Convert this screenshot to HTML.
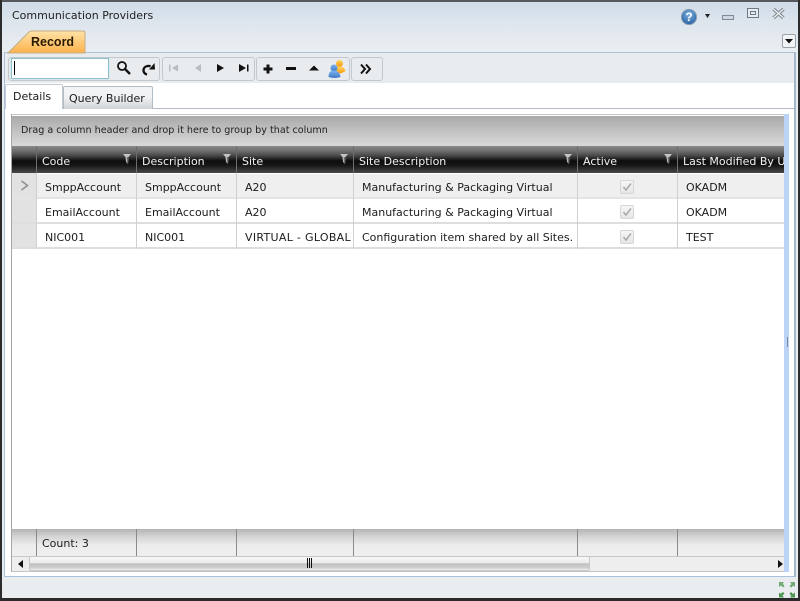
<!DOCTYPE html>
<html><head><meta charset="utf-8">
<style>
*{box-sizing:border-box}
html,body{margin:0;padding:0}
body{width:800px;height:601px;overflow:hidden;position:relative;background:#fff;font-family:"DejaVu Sans","Liberation Sans",sans-serif;font-size:11px;color:#1c1c1c}
.a{position:absolute}
.t{position:absolute;white-space:nowrap;line-height:14px}
.btn{position:absolute;top:57px;height:24px;border:1px solid #c4c8cc;border-radius:3px;background:#e9ecef}
.h{position:absolute;top:146px;height:27px;border-right:1px solid #6e6e6e}
.hl{position:absolute;top:155px;color:#f2f2f2;white-space:nowrap;line-height:14px;font-size:11px}
.v{position:absolute;width:1px;background:#d0d0d0}
.r{position:absolute;left:12px;width:772px;height:1px;background:#d4d4d4}
.cb{position:absolute;left:620px;width:14px;height:14px;border:1px solid #d6d6d6;border-radius:2px;background:linear-gradient(#f6f6f6,#e6e6e6)}
.fc{position:absolute;top:529px;height:27px;width:1px;background:#8a8a8a}
</style></head><body>
<!-- window frame -->
<div class="a" style="left:0;top:0;width:800px;height:601px;background:#e9edf0"></div>
<div class="a" style="left:2px;top:2px;width:796px;height:50px;background:linear-gradient(#cfdbe8,#dde5ed 40%,#eaeef1)"></div>
<div class="a" style="left:0;top:0;width:800px;height:2px;background:#55585c"></div>
<div class="a" style="left:0;top:0;width:2px;height:601px;background:#2c2c2c"></div>
<div class="a" style="left:798px;top:0;width:2px;height:601px;background:#2c2c2c"></div>
<div class="a" style="left:0;top:598px;width:800px;height:3px;background:#2a2a2a"></div>
<div class="t" style="left:12px;top:9px;font-size:11px;color:#222">Communication Providers</div>

<!-- title icons -->
<svg class="a" style="left:680px;top:8px" width="18" height="18" viewBox="0 0 18 18"><defs><radialGradient id="q" cx=".5" cy=".35" r=".7"><stop offset="0" stop-color="#7fb2e2"/><stop offset="1" stop-color="#1f5c9c"/></radialGradient></defs><circle cx="9" cy="9" r="7.6" fill="url(#q)" stroke="#8ba0b4"/><text x="9" y="13" font-size="12" font-weight="bold" fill="#fff" text-anchor="middle" font-family="Liberation Sans">?</text></svg>
<svg class="a" style="left:704px;top:14px" width="8" height="5"><path d="M1 0h5L3.500 4z" fill="#222"/></svg>
<div class="a" style="left:722px;top:15px;width:12px;height:5px;border:1px solid #7d8a97;background:#cfd8e0"></div>
<div class="a" style="left:747px;top:8px;width:12px;height:10px;border:1px solid #6d7986;background:#e6ebf0"><div style="margin:2px;height:4px;border:1px solid #6d7986"></div></div>
<svg class="a" style="left:772px;top:8px" width="13" height="11"><path d="M1.500 1 11.500 10M11.500 1 1.500 10" stroke="#7d868e" stroke-width="3.400" fill="none"/><path d="M1.500 1 11.500 10M11.500 1 1.500 10" stroke="#eef1f3" stroke-width="1.300" fill="none"/></svg>
<div class="a" style="left:782px;top:34px;width:14px;height:14px;border:1px solid #9aa2aa;border-radius:2px;background:#f3f4f5"><svg style="position:absolute;left:2px;top:4px" width="8" height="5"><path d="M0 0h8L4 4.500z" fill="#111"/></svg></div>

<!-- content panel -->
<div class="a" style="left:4px;top:52px;width:792px;height:525px;background:#fff;border:1px solid #a9c1da"></div>
<div class="a" style="left:5px;top:53px;width:790px;height:30px;background:#e9ecef"></div>

<!-- record tab -->
<svg class="a" style="left:6px;top:29px" width="82" height="25"><defs><linearGradient id="o" x1="0" y1="0" x2="0" y2="1"><stop offset="0" stop-color="#ffe3a6"/><stop offset="1" stop-color="#fdb14c"/></linearGradient></defs><path d="M2 24 23 3Q24 2 26 2H77Q79 2 79 4V24Z" fill="url(#o)" stroke="#c6ad84"/></svg>
<div class="t" style="left:31px;top:35px;font-family:'Liberation Sans',sans-serif;font-weight:bold;font-size:12.500px;color:#2a1a00">Record</div>

<!-- toolbar -->
<div class="btn" style="left:8px;width:152px"></div>
<div class="btn" style="left:162px;width:93px"></div>
<div class="btn" style="left:256px;width:94px"></div>
<div class="btn" style="left:351px;width:32px"></div>
<div class="a" style="left:11px;top:58px;width:98px;height:21px;background:#fff;border:1px solid #8fc0cf;box-shadow:0 0 1px #a5d0dd"></div>
<div class="a" style="left:14px;top:61px;width:1px;height:14px;background:#000"></div>
<svg class="a" style="left:116px;top:60px" width="16" height="16"><circle cx="6" cy="6" r="4" fill="none" stroke="#111" stroke-width="1.800"/><path d="M9 9l5 5" stroke="#111" stroke-width="2.400"/></svg>
<svg class="a" style="left:141px;top:60px" width="15" height="17"><path d="M6 14.500C1.500 13.500 1 7 6.500 6c1.200-.2 2-.1 3 .4" fill="none" stroke="#111" stroke-width="2.400"/><path d="M8 9.500 14 9.500 13.500 3z" fill="#111"/></svg>
<svg class="a" style="left:168px;top:63px" width="12" height="11"><path d="M1 1.500h1.500v7H1zM10 1.500v7L4 5z" fill="#b9bdc1"/></svg>
<svg class="a" style="left:192px;top:63px" width="12" height="11"><path d="M9 1v8L3 5z" fill="#b9bdc1"/></svg>
<svg class="a" style="left:215px;top:63px" width="12" height="11"><path d="M2 1v8l7-4z" fill="#111"/></svg>
<svg class="a" style="left:238px;top:63px" width="12" height="11"><path d="M1 1v8l7-4zM9 1.500h1.500v7H9z" fill="#111"/></svg>
<svg class="a" style="left:262px;top:63px" width="12" height="12"><path d="M4.500 1.500h3v3h3v3h-3v3h-3v-3h-3v-3h3z" fill="#111"/></svg>
<div class="a" style="left:286px;top:67px;width:10px;height:3px;background:#111"></div>
<svg class="a" style="left:308px;top:64px" width="12" height="8"><path d="M1 6.500 6 1.500 11 6.500z" fill="#111"/></svg>
<svg class="a" style="left:328px;top:58px" width="20" height="21"><defs><linearGradient id="or" x1="0" y1="0" x2="0" y2="1"><stop offset="0" stop-color="#ffd35a"/><stop offset="1" stop-color="#f79a12"/></linearGradient><linearGradient id="bl" x1="0" y1="0" x2="0" y2="1"><stop offset="0" stop-color="#7fb4f0"/><stop offset="1" stop-color="#3f78c8"/></linearGradient></defs><circle cx="11.500" cy="5.500" r="3.500" fill="url(#or)"/><path d="M6.500 15Q6.500 8.500 11.500 8.500T17.500 13Q12 17 6.500 15z" fill="url(#or)"/><circle cx="6" cy="10" r="3.500" fill="url(#bl)"/><path d="M.5 19Q.5 12.500 6 12.500T12.500 19Q6.500 21 .5 19z" fill="url(#bl)"/></svg>
<svg class="a" style="left:360px;top:63px" width="13" height="12"><path d="M1 1.500 5 6 1 10.500M6 1.500 10 6 6 10.500" fill="none" stroke="#111" stroke-width="2"/></svg>

<!-- tabs -->
<div class="a" style="left:5px;top:108px;width:790px;height:1px;background:#b5bcc3"></div>
<div class="a" style="left:5px;top:84px;width:58px;height:25px;background:#fff;border:1px solid #c3cad1;border-bottom:none;border-radius:2px 2px 0 0"></div>
<div class="a" style="left:63px;top:86px;width:90px;height:23px;background:linear-gradient(#f3f4f6,#f1f2f4 45%,#cfd3d8);border:1px solid #b3bbc3;border-bottom:none;border-radius:2px 2px 0 0"></div>
<div class="t" style="left:13px;top:90px">Details</div>
<div class="t" style="left:69px;top:92px">Query Builder</div>

<!-- grid -->
<div class="a" style="left:11px;top:114px;width:773px;height:458px;background:#fff;border-left:1px solid #a8a8a8;border-top:1px solid #c8c8c8"></div>
<div class="a" style="left:12px;top:116px;width:772px;height:30px;background:linear-gradient(#a9a9a9,#c4c4c4 55%,#d9d9d9)"></div>
<div class="t" style="left:21px;top:124px;font-size:9.600px;color:#222">Drag a column header and drop it here to group by that column</div>

<!-- header -->
<div class="a" style="left:12px;top:146px;width:772px;height:27px;background:linear-gradient(#8c8c8c,#6f6f6f 18%,#4a4a4a 35%,#0e0e0e 55%,#141414 70%,#484848 100%)"></div>
<div class="h" style="left:12px;width:25px"></div>
<div class="h" style="left:37px;width:100px"></div>
<div class="h" style="left:137px;width:100px"></div>
<div class="h" style="left:237px;width:117px"></div>
<div class="h" style="left:354px;width:224px"></div>
<div class="h" style="left:578px;width:100px"></div>
<div class="hl" style="left:42px">Code</div>
<div class="hl" style="left:142px">Description</div>
<div class="hl" style="left:242px">Site</div>
<div class="hl" style="left:359px">Site Description</div>
<div class="hl" style="left:583px">Active</div>
<div class="a" style="left:678px;top:146px;width:106px;height:27px;overflow:hidden"><div class="hl" style="left:5px;top:9px">Last Modified By User</div></div>
<svg class="a" style="left:121px;top:152px" width="12" height="13"><path d="M2 2h8L7.500 5 7 12 5 10 4.500 5z" fill="#c4c4c4"/><path d="M7.500 5 7 12 5.800 11V5z" fill="#6f6f6f"/></svg>
<svg class="a" style="left:221px;top:152px" width="12" height="13"><path d="M2 2h8L7.500 5 7 12 5 10 4.500 5z" fill="#c4c4c4"/><path d="M7.500 5 7 12 5.800 11V5z" fill="#6f6f6f"/></svg>
<svg class="a" style="left:338px;top:152px" width="12" height="13"><path d="M2 2h8L7.500 5 7 12 5 10 4.500 5z" fill="#c4c4c4"/><path d="M7.500 5 7 12 5.800 11V5z" fill="#6f6f6f"/></svg>
<svg class="a" style="left:562px;top:152px" width="12" height="13"><path d="M2 2h8L7.500 5 7 12 5 10 4.500 5z" fill="#c4c4c4"/><path d="M7.500 5 7 12 5.800 11V5z" fill="#6f6f6f"/></svg>
<svg class="a" style="left:662px;top:152px" width="12" height="13"><path d="M2 2h8L7.500 5 7 12 5 10 4.500 5z" fill="#c4c4c4"/><path d="M7.500 5 7 12 5.800 11V5z" fill="#6f6f6f"/></svg>

<!-- rows -->
<div class="a" style="left:37px;top:174px;width:747px;height:23px;background:#efefef"></div>
<div class="a" style="left:12px;top:173px;width:24px;height:24px;background:#e2e2e2"></div>
<div class="a" style="left:12px;top:199px;width:24px;height:23px;background:#e2e2e2"></div>
<div class="a" style="left:12px;top:224px;width:24px;height:23px;background:#e2e2e2"></div>
<svg class="a" style="left:20px;top:180px" width="10" height="11"><path d="M1.500 1 7.500 5.500 1.500 10" fill="none" stroke="#8f8f8f" stroke-width="1.600"/></svg>
<div class="r" style="top:197px;height:2px;background:#e4e4e4"></div>
<div class="r" style="top:222px;height:2px;background:#dedede"></div>
<div class="r" style="top:247px;height:2px;background:#dedede"></div>
<div class="v" style="left:36px;top:173px;height:76px"></div>
<div class="v" style="left:136px;top:173px;height:76px"></div>
<div class="v" style="left:236px;top:173px;height:76px"></div>
<div class="v" style="left:353px;top:173px;height:76px"></div>
<div class="v" style="left:577px;top:173px;height:76px"></div>
<div class="v" style="left:677px;top:173px;height:76px"></div>

<div class="t" style="left:45px;top:181px">SmppAccount</div>
<div class="t" style="left:145px;top:181px">SmppAccount</div>
<div class="t" style="left:245px;top:181px">A20</div>
<div class="t" style="left:362px;top:181px">Manufacturing &amp; Packaging Virtual</div>
<div class="t" style="left:686px;top:181px">OKADM</div>
<div class="t" style="left:45px;top:206px">EmailAccount</div>
<div class="t" style="left:145px;top:206px">EmailAccount</div>
<div class="t" style="left:245px;top:206px">A20</div>
<div class="t" style="left:362px;top:206px">Manufacturing &amp; Packaging Virtual</div>
<div class="t" style="left:686px;top:206px">OKADM</div>
<div class="t" style="left:45px;top:231px">NIC001</div>
<div class="t" style="left:145px;top:231px">NIC001</div>
<div class="t" style="left:245px;top:231px;width:107px;overflow:hidden;letter-spacing:.3px">VIRTUAL - GLOBAL</div>
<div class="t" style="left:362px;top:231px">Configuration item shared by all Sites.</div>
<div class="t" style="left:686px;top:231px">TEST</div>
<div class="cb" style="top:180px"><svg style="position:absolute;left:1px;top:1px" width="10" height="10"><path d="M1.500 5 4 8 9 1.500" fill="none" stroke="#a9a9a9" stroke-width="1.500"/></svg></div>
<div class="cb" style="top:205px"><svg style="position:absolute;left:1px;top:1px" width="10" height="10"><path d="M1.500 5 4 8 9 1.500" fill="none" stroke="#a9a9a9" stroke-width="1.500"/></svg></div>
<div class="cb" style="top:230px"><svg style="position:absolute;left:1px;top:1px" width="10" height="10"><path d="M1.500 5 4 8 9 1.500" fill="none" stroke="#a9a9a9" stroke-width="1.500"/></svg></div>

<!-- blue strip -->
<div class="a" style="left:784px;top:114px;width:5px;height:458px;background:#bcd3f8"></div>
<div class="a" style="left:787px;top:337px;width:1px;height:10px;background:#7d8aa0"></div>
<div class="a" style="left:794px;top:52px;width:2px;height:525px;background:#a4b7cc"></div>

<!-- footer -->
<div class="a" style="left:12px;top:529px;width:772px;height:27px;background:linear-gradient(#b4b4b4,#d6d6d6 30%,#ececec 60%,#efefef)"></div>
<div class="fc" style="left:36px"></div><div class="fc" style="left:136px"></div><div class="fc" style="left:236px"></div><div class="fc" style="left:353px"></div><div class="fc" style="left:577px"></div><div class="fc" style="left:677px"></div>
<div class="t" style="left:42px;top:537px">Count: 3</div>

<!-- scrollbar -->
<div class="a" style="left:12px;top:556px;width:772px;height:16px;background:#eeeeee;border-top:1px solid #c8c8c8;border-bottom:1px solid #c4c4c4"></div>
<svg class="a" style="left:18px;top:560px" width="6" height="8"><path d="M5 0v8L0 4z" fill="#111"/></svg>
<svg class="a" style="left:778px;top:560px" width="6" height="8"><path d="M0 0v8l5-4z" fill="#111"/></svg>
<div class="a" style="left:29px;top:556px;width:561px;height:15px;border:1px solid #c8c8c8;border-radius:2px;background:linear-gradient(#f7f7f7,#ececec 45%,#c0c0c0 52%,#d0d0d0 85%,#f2f2f2)"></div>
<div class="a" style="left:307px;top:558px;width:1px;height:10px;background:#111"></div>
<div class="a" style="left:309px;top:558px;width:1px;height:10px;background:#111"></div>
<div class="a" style="left:311px;top:558px;width:1px;height:10px;background:#111"></div>

<!-- status grips -->
<svg class="a" style="left:778px;top:581px" width="18" height="17"><path d="M1 1h5L4.800 2.500 6.500 5 5 6.500 3 4.500 1 6z" fill="#74ab76"/><path d="M17 1v5L15.500 4.800 13 6.500 11.500 5 13.500 3 12 1z" fill="#74ab76"/><path d="M1 16.500v-5l1.500 1.200L5 11 6.500 12.500 4.500 14.500 6 16.500z" fill="#4f9852"/><path d="M17 16.500h-5l1.200-1.500L11.500 12.500 13 11 15 13 17 11.500z" fill="#4f9852"/></svg>
</body></html>
